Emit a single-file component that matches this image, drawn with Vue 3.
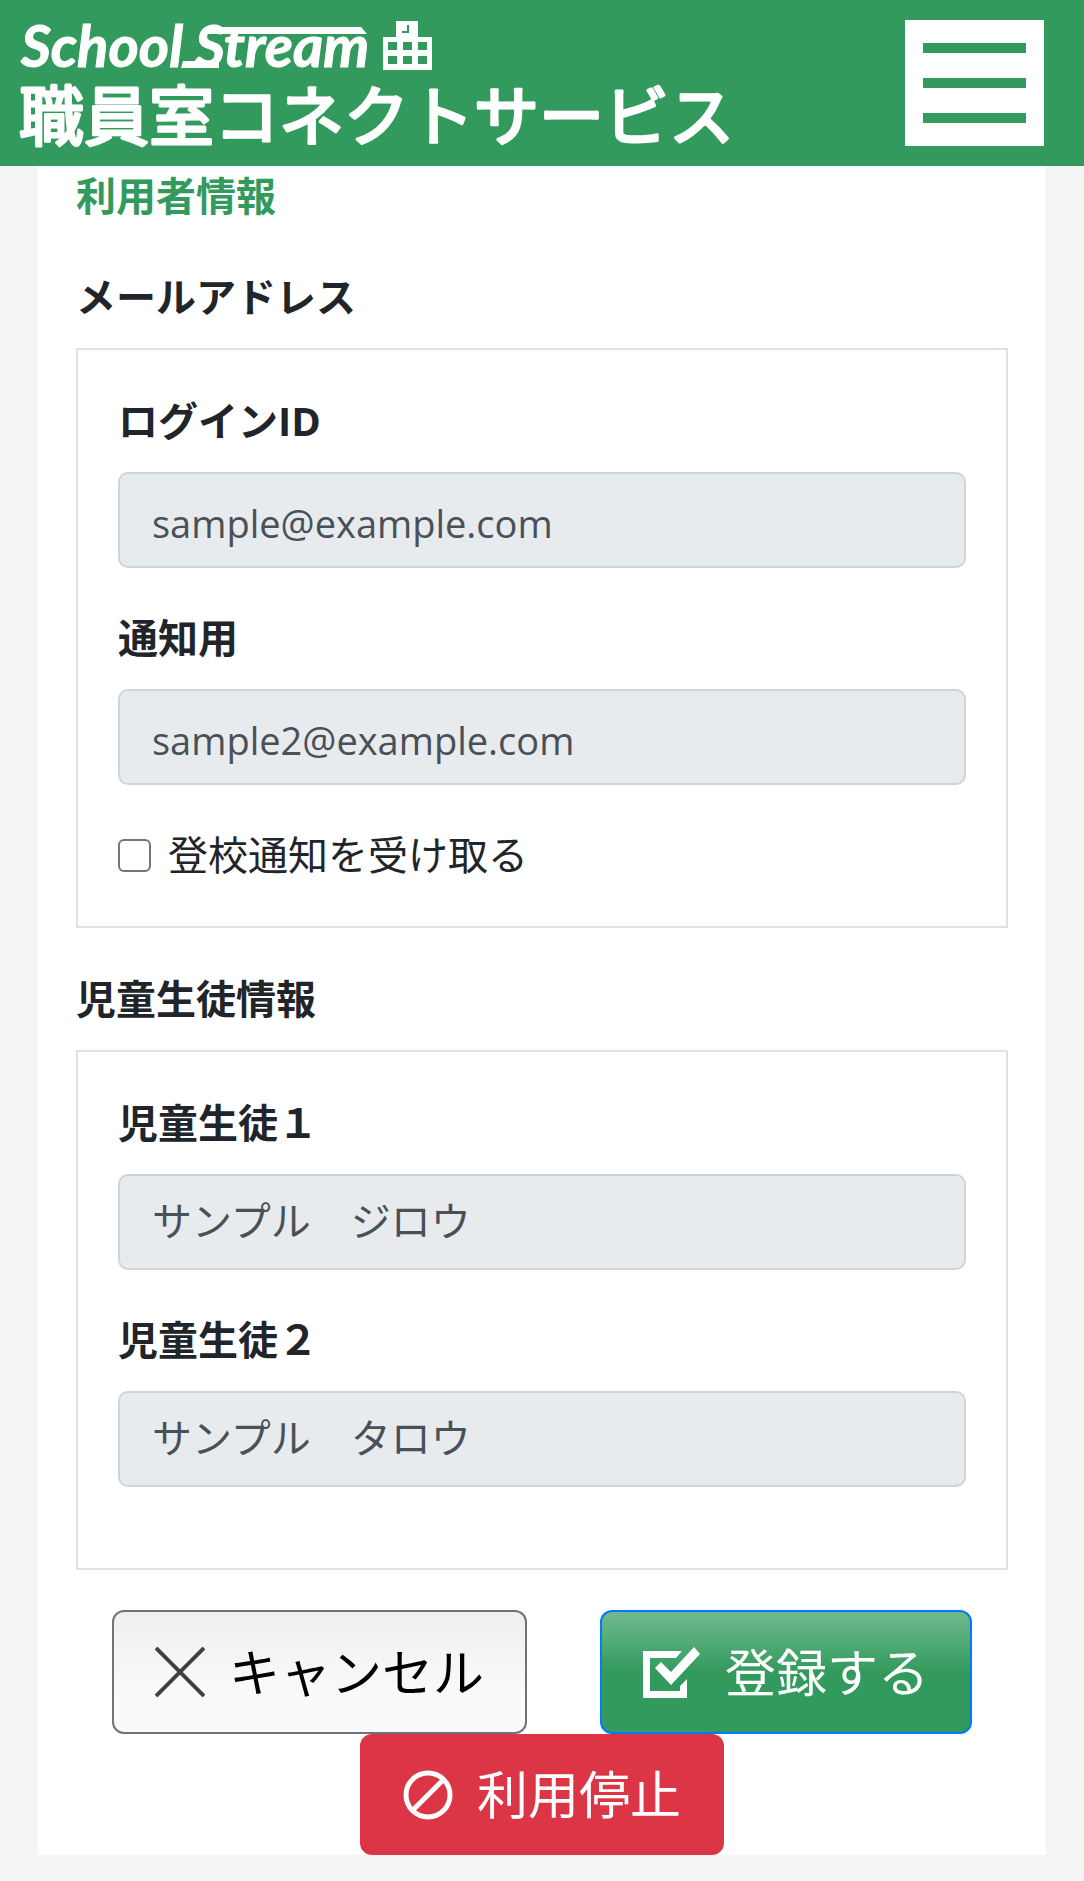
<template>
  <div class="page">
    <header class="page-header">
      <a class="brand" href="#" aria-label="School Stream 職員室コネクトサービス">
        <svg class="brand__logo" viewBox="0 0 720 126">
          <text class="brand__name" x="1" y="47">School</text>
          <text class="brand__name" x="175" y="47">Stream</text>
          <path d="M192 7H341l6 7H186zM163 41h36v7H161z" fill="#fff" />
          <path
            fill="#fff"
            fill-rule="evenodd"
            d="M376 1h22v16h14v33h-49V17h13zM368 22v8h9v-8zM383 22v8h9v-8zM398 22v8h9v-8zM368 36v8h9v-8zM383 36v8h9v-8zM398 36v8h9v-8zM387 5v6h-5v2h7V5z"
          />
          <text class="brand__service" x="-1" y="120">職員室コネクトサービス</text>
        </svg>
      </a>
      <button class="menu-button" type="button" aria-label="メニュー">
        <span v-for="n in 3" :key="n" class="menu-button__bar"></span>
      </button>
    </header>

    <main class="content">
      <h1 class="content__title">利用者情報</h1>

      <form @submit.prevent>
        <h2 class="section-title">メールアドレス</h2>
        <section class="panel">
          <div v-for="field in mailFields" :key="field.id" class="field">
            <label class="field__label" :for="field.id">{{ field.label }}</label>
            <input :id="field.id" class="field__input field__input--mail" type="email" :value="field.value" readonly>
          </div>
          <div class="check">
            <input id="notify" v-model="notify" class="check__box" type="checkbox">
            <label for="notify">登校通知を受け取る</label>
          </div>
        </section>

        <h2 class="section-title section-title--spaced">児童生徒情報</h2>
        <section class="panel">
          <div v-for="field in studentFields" :key="field.id" class="field">
            <label class="field__label" :for="field.id">{{ field.label }}</label>
            <input :id="field.id" class="field__input" type="text" :value="field.value" readonly>
          </div>
        </section>

        <div class="actions">
          <button class="btn btn--cancel" type="button">
            <svg class="btn__icon" viewBox="0 0 50 50">
              <path d="M1 1l48 48M49 1L1 49" fill="none" stroke="#404040" stroke-width="4" />
            </svg>
            キャンセル
          </button>
          <button class="btn btn--submit" type="submit">
            <svg class="btn__icon btn__icon--check" viewBox="0 0 58 52">
              <path d="M0 5h39l-6 7H7v33h30v-5l7-7v19H0z" fill="#fff" />
              <path d="M12 22l6-6 10 10L51 1l6 7-29 31z" fill="#fff" />
            </svg>
            登録する
          </button>
        </div>
        <div class="actions actions--stop">
          <button class="btn btn--stop" type="button">
            <svg class="btn__icon" viewBox="0 0 50 50">
              <circle cx="25" cy="25" r="22" fill="none" stroke="#fff" stroke-width="5" />
              <path d="M10 40L40 10" stroke="#fff" stroke-width="5" />
            </svg>
            利用停止
          </button>
        </div>
      </form>
    </main>
  </div>
</template>

<script setup>
import { ref } from "vue";

const notify = ref(false);

const mailFields = [
  { id: "login-id", label: "ログインID", value: "sample@example.com" },
  { id: "notice-mail", label: "通知用", value: "sample2@example.com" }
];

const studentFields = [
  { id: "student-1", label: "児童生徒１", value: "サンプル　ジロウ" },
  { id: "student-2", label: "児童生徒２", value: "サンプル　タロウ" }
];
</script>

<style>
body {
  background: #f4f4f4;
  margin: 0;
}
</style>

<style scoped>
.page {
  color: #212529;
  font-family: "Open Sans", "Noto Sans CJK JP", sans-serif;
  font-size: 40px;
  line-height: 60px;
  padding-bottom: 27px;
}

.page-header {
  align-items: center;
  background: #339a5d;
  display: flex;
  gap: 20px;
  justify-content: space-between;
  padding: 20px 40px 20px 20px;
}

.brand {
  display: block;
  flex: 0 1 720px;
  min-width: 0;
}

.brand__logo {
  display: block;
  overflow: visible;
  width: 100%;
}

.brand__name {
  fill: #fff;
  font-family: Lato, sans-serif;
  font-size: 58px;
  font-style: italic;
  font-weight: 700;
  stroke: #fff;
  stroke-width: 1px;
}

.brand__service {
  fill: #fff;
  font-family: "Noto Sans CJK JP", sans-serif;
  font-size: 65px;
  font-weight: 400;
  stroke: #fff;
  stroke-linejoin: round;
  stroke-width: 3px;
}

.menu-button {
  background: #fff;
  border: 0;
  cursor: pointer;
  display: flex;
  flex: none;
  flex-direction: column;
  gap: 25px;
  height: 126px;
  justify-content: center;
  padding: 0 18px;
  width: 139px;
}

.menu-button__bar {
  background: #339a5d;
  height: 10px;
}

.content {
  background: #fff;
  margin: 0 38px;
  padding: 0 38px;
}

.content__title,
.section-title {
  font-size: 40px;
  font-weight: 700;
  line-height: 60px;
  margin: 0;
}

.content__title {
  color: #339a5d;
  margin-bottom: 41px;
}

.section-title {
  margin-bottom: 21px;
}

.section-title--spaced {
  margin-top: 41px;
}

.panel {
  border: 2px solid #dee2e6;
  padding: 41px 40px;
}

.field {
  margin-bottom: 40px;
}

.field__label {
  display: block;
  font-weight: 700;
  margin-bottom: 21px;
}

.field__input {
  background: #e8ebee;
  border: 2px solid #ced4da;
  border-radius: 10px;
  box-sizing: border-box;
  color: #495057;
  display: block;
  font: inherit;
  height: 96px;
  outline: none;
  padding: 0 32px 6px;
  width: 100%;
}

.field__input--mail {
  font-size: 38px;
  padding: 6px 32px 0;
}

.check {
  align-items: center;
  display: flex;
  gap: 17px;
}

.check__box {
  appearance: none;
  background: #fff;
  border: 2px solid #767676;
  border-radius: 6px;
  flex: none;
  height: 33px;
  margin: 0;
  width: 33px;
}

.check__box:checked {
  background: #339a5d;
}

.actions {
  display: flex;
  flex-wrap: wrap;
  justify-content: center;
  column-gap: 73px;
  padding-top: 40px;
}

.actions--stop {
  padding-top: 0;
}

.btn {
  align-items: center;
  border: 2px solid transparent;
  border-radius: 12px;
  box-sizing: border-box;
  cursor: pointer;
  display: flex;
  font-family: inherit;
  font-size: 51px;
  gap: 24px;
  height: 124px;
  line-height: 75px;
  padding: 0 41px;
  white-space: nowrap;
}

.btn__icon {
  flex: none;
  height: 50px;
  width: 50px;
}

.btn__icon--check {
  height: 52px;
  width: 58px;
}

.btn--cancel {
  background: linear-gradient(#efefef, #fafafa 70%);
  border-color: #6c757d;
  color: #000;
}

.btn--submit {
  background: linear-gradient(#70b98d, #339a5d 50%);
  border-color: #007bff;
  color: #fff;
}

.btn--stop {
  background: #dc3545;
  border-color: #dc3545;
  color: #fff;
  height: 121px;
}
</style>
